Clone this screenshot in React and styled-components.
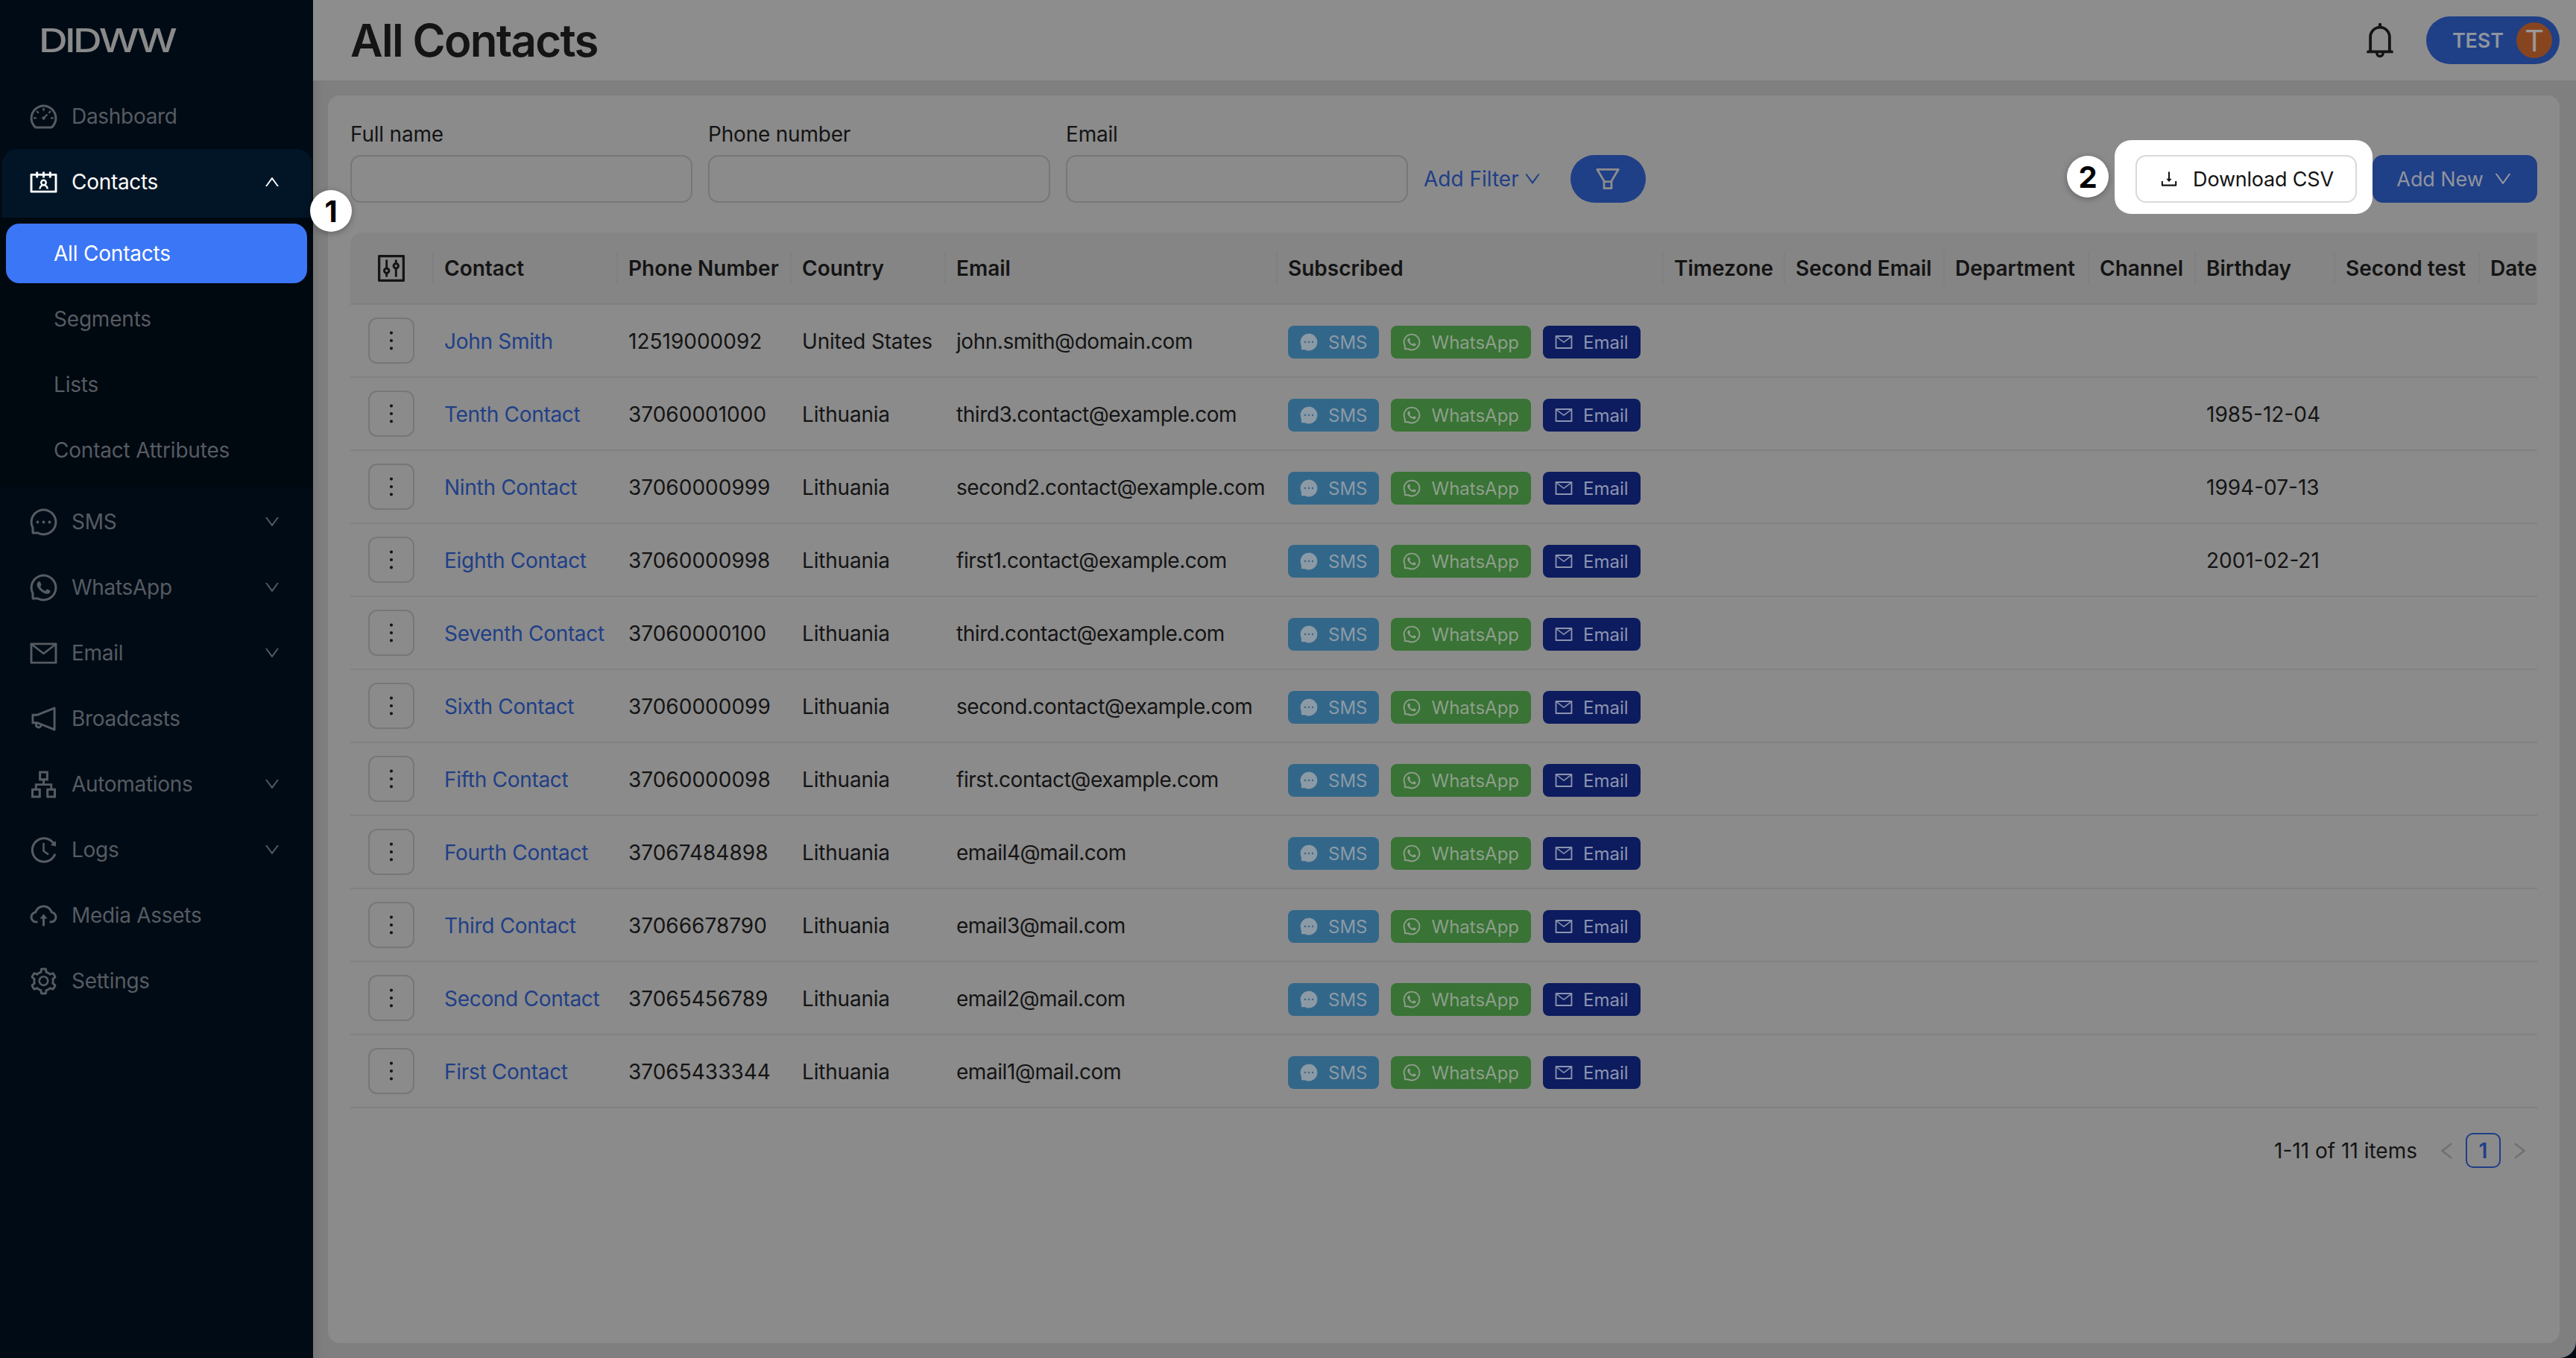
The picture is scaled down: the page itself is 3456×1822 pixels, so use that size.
import React from "react";
import styled, { createGlobalStyle } from "styled-components";
import {
  AiOutlineDashboard,
  AiOutlineContacts,
  AiOutlineMessage,
  AiFillMessage,
  AiOutlineWhatsApp,
  AiOutlineMail,
  AiOutlineNotification,
  AiOutlineApartment,
  AiOutlineHistory,
  AiOutlineCloudUpload,
  AiOutlineSetting,
  AiOutlineBell,
  AiOutlineDownload,
  AiOutlineFilter,
  AiOutlineDown,
  AiOutlineUp,
  AiOutlineMore,
  AiOutlineLeft,
  AiOutlineRight,
  AiOutlineControl,
} from "react-icons/ai";

const BLUE = "#1f3f87";
const INK = "#141414";

const GlobalStyle = createGlobalStyle`
  html, body {
    margin: 0;
    padding: 0;
    background: #010b15;
  }
  body {
    font-family: Inter, "Noto Sans", sans-serif;
    color: ${INK};
  }
  * { box-sizing: border-box; }
`;

const Shell = styled.div`
  display: flex;
  width: 3456px;
  height: 1822px;
  overflow: hidden;
  background: #010b15;
`;

const Sidebar = styled.aside`
  flex: 0 0 420px;
  background: #010b15;
  display: flex;
  flex-direction: column;
`;

const LogoRow = styled.div`
  height: 112px;
  padding: 28px 0 0 52px;
`;

const Logo = styled.span`
  display: inline-block;
  font-family: Inter, sans-serif;
  font-size: 44px;
  line-height: 53px;
  font-weight: 500;
  color: #8a8a8a;
  letter-spacing: -3px;
  transform: scaleX(1.22);
  transform-origin: left center;
`;

const NavRow = styled.div`
  height: 88px;
  display: flex;
  align-items: center;
  padding: 0 45px 0 40px;
  font-size: 28px;
  letter-spacing: -0.3px;
  color: ${(p) => (p.$active ? "#ffffff" : "#565b62")};
  ${(p) =>
    p.$active &&
    `
    background: #021526;
    margin: 0 2px 0 3px;
    padding-left: 37px;
    padding-right: 43px;
    height: 92px;
    padding-bottom: 4px;
    border-radius: 20px 20px 0 0;
  `}
`;

const NavIcon = styled.span`
  display: flex;
  justify-content: center;
  width: 36px;
  margin-right: 20px;
  svg {
    flex: none;
    font-size: 41px;
  }
`;

const NavLabel = styled.span`
  flex: 1;
`;

const NavArrow = styled.span`
  display: flex;
  font-size: 24px;
  margin-right: -2px;
`;

const SubMenu = styled.div`
  background: #000810;
  height: 361px;
  margin-bottom: 3px;
  padding: 8px 8px 0;
`;

const SubItem = styled.div`
  height: 80px;
  margin-bottom: 8px;
  border-radius: 18px;
  padding-left: 64px;
  display: flex;
  align-items: center;
  font-size: 28px;
  letter-spacing: -0.2px;
  color: ${(p) => (p.$active ? "#ffffff" : "#565b62")};
  background: ${(p) => (p.$active ? "#3b76f6" : "transparent")};
`;

const Main = styled.main`
  flex: 1;
  min-width: 0;
  display: flex;
  flex-direction: column;
  background: #7f7f7f;
  border-bottom-right-radius: 22px;
  box-shadow: inset 14px 0 12px -10px #737373;
`;

const TopBar = styled.header`
  height: 108px;
  flex: 0 0 108px;
  background: #8d8d8d;
  display: flex;
  align-items: center;
  padding: 0 22px 0 50px;
`;

const Title = styled.h1`
  flex: 1;
  margin: 0;
  font-size: 60px;
  font-weight: 600;
  letter-spacing: -1.7px;
  color: ${INK};
`;

const Bell = styled.span`
  display: flex;
  font-size: 54px;
  margin-right: 35px;
  color: ${INK};
`;

const UserPill = styled.div`
  width: 179px;
  height: 64px;
  border-radius: 32px;
  background: ${BLUE};
  display: flex;
  align-items: center;
  justify-content: space-between;
  padding: 0 10px 0 35px;
  font-size: 27px;
  font-weight: 600;
  letter-spacing: -0.2px;
  color: #8f949e;
`;

const Avatar = styled.span`
  width: 48px;
  height: 48px;
  border-radius: 50%;
  background: #87451f;
  color: #999999;
  font-weight: 400;
  font-size: 40px;
  display: flex;
  align-items: center;
  justify-content: center;
`;

const Panel = styled.section`
  flex: 1;
  margin: 20px 22px 20px 20px;
  background: #8b8b8b;
  border-radius: 16px;
  padding: 40px 30px 0 30px;
`;

const Toolbar = styled.div`
  display: flex;
  align-items: flex-end;
  height: 104px;
  margin-bottom: 40px;
  position: relative;
`;

const Field = styled.label`
  display: flex;
  flex-direction: column;
  width: 459px;
  margin-right: 21px;
  font-size: 28px;
  letter-spacing: -0.2px;
`;

const FieldLabel = styled.span`
  line-height: 34px;
  margin-bottom: 11px;
`;

const TextInput = styled.input`
  height: 64px;
  border: 2px solid #777777;
  border-radius: 14px;
  background: transparent;
  outline: none;
`;

const AddFilter = styled.div`
  height: 64px;
  display: flex;
  align-items: center;
  gap: 5px;
  font-size: 28px;
  color: ${BLUE};
  margin-right: 38px;
`;

const FilterButton = styled.button`
  width: 101px;
  height: 64px;
  border: none;
  border-radius: 32px;
  background: ${BLUE};
  color: #8d8d8d;
  font-size: 40px;
  display: flex;
  align-items: center;
  justify-content: center;
`;

const Actions = styled.div`
  margin-left: auto;
  display: flex;
  align-items: flex-end;
`;

const Spotlight = styled.div`
  position: relative;
  z-index: 1;
  margin: -20px 0 -15px;
  padding: 20px 21px 15px 28px;
  background: #ffffff;
  border-radius: 22px;
  display: flex;
`;

const DownloadButton = styled.button`
  width: 297px;
  height: 64px;
  border: 2px solid #d9d9d9;
  border-radius: 14px;
  background: #ffffff;
  color: ${INK};
  font-family: inherit;
  font-size: 27px;
  letter-spacing: -0.2px;
  display: flex;
  align-items: center;
  justify-content: center;
  gap: 18px;
  svg {
    font-size: 28px;
  }
`;

const AddNewButton = styled.button`
  width: 221px;
  height: 64px;
  border: none;
  border-radius: 14px;
  background: ${BLUE};
  color: #8f949e;
  font-family: inherit;
  font-size: 27px;
  letter-spacing: -0.1px;
  display: flex;
  align-items: center;
  justify-content: center;
  gap: 12px;
  svg {
    font-size: 28px;
  }
`;

const Marker = styled.span`
  position: absolute;
  z-index: 5;
  left: ${(p) => p.$x}px;
  top: ${(p) => p.$y}px;
  width: 56px;
  height: 56px;
  border-radius: 50%;
  background: #ffffff;
  color: #000000;
  font-size: 40px;
  font-weight: 700;
  display: flex;
  align-items: center;
  justify-content: center;
  box-shadow: 0 2px 8px rgba(0, 0, 0, 0.3);
`;

const TableClip = styled.div`
  overflow: hidden;
  width: 2934px;
`;

const Table = styled.table`
  table-layout: fixed;
  width: 3100px;
  border-collapse: collapse;
`;

const Col = styled.col`
  width: ${(p) => p.$w}px;
`;

const Th = styled.th`
  height: 96px;
  padding: 0 0 0 16px;
  text-align: left;
  font-size: 28px;
  font-weight: 600;
  color: ${INK};
  background: #858585;
  border-bottom: 2px solid #7f7f7f;
  position: relative;
  white-space: nowrap;
  &:not(:first-child)::before {
    content: "";
    position: absolute;
    left: 0;
    top: 26px;
    bottom: 26px;
    width: 2px;
    background: #808080;
  }
  &:first-child {
    padding: 0;
    border-top-left-radius: 16px;
  }
`;

const ColumnsIcon = styled.span`
  display: flex;
  justify-content: center;
  font-size: 46px;
`;

const Td = styled.td`
  height: 98px;
  padding: 2px 0 0 16px;
  font-size: 28px;
  color: ${INK};
  border-bottom: 2px solid #818181;
  white-space: nowrap;
  letter-spacing: ${(p) => p.$spacing || 0}px;
  &:first-child {
    padding: 0;
  }
`;

const MoreButton = styled.button`
  display: flex;
  align-items: center;
  justify-content: center;
  width: 62px;
  height: 62px;
  margin: 0 auto;
  padding: 0;
  border: 2px solid #777777;
  border-radius: 12px;
  background: transparent;
  color: ${INK};
  font-size: 38px;
`;

const ContactLink = styled.a`
  color: ${BLUE};
  text-decoration: none;
`;

const Tags = styled.div`
  display: flex;
  gap: 16px;
  padding-top: 2px;
`;

const Tag = styled.span`
  height: 44px;
  padding: 0 16px;
  border-radius: 8px;
  background: ${(p) => p.$bg};
  color: ${(p) => p.$fg};
  font-size: 24px;
  letter-spacing: 0;
  display: inline-flex;
  align-items: center;
  gap: 14px;
  svg {
    flex: none;
    font-size: 26px;
    margin: 0 -1px;
  }
`;

const Pagination = styled.div`
  display: flex;
  align-items: center;
  justify-content: flex-end;
  height: 47px;
  margin-top: 33px;
  padding-right: 9px;
  font-size: 28px;
`;

const PageInfo = styled.span`
  margin-right: 25px;
`;

const PageArrow = styled.span`
  display: flex;
  font-size: 30px;
  color: #6f6f6f;
`;

const PageNumber = styled.span`
  width: 47px;
  height: 47px;
  margin: 0 10px;
  border: 2px solid ${BLUE};
  border-radius: 10px;
  color: ${BLUE};
  font-weight: 600;
  display: flex;
  align-items: center;
  justify-content: center;
`;

const navTop = [{ label: "Dashboard", icon: <AiOutlineDashboard /> }];

const navBottom = [
  { label: "SMS", icon: <AiOutlineMessage />, arrow: true },
  { label: "WhatsApp", icon: <AiOutlineWhatsApp />, arrow: true },
  { label: "Email", icon: <AiOutlineMail />, arrow: true },
  { label: "Broadcasts", icon: <AiOutlineNotification /> },
  { label: "Automations", icon: <AiOutlineApartment />, arrow: true },
  { label: "Logs", icon: <AiOutlineHistory />, arrow: true },
  { label: "Media Assets", icon: <AiOutlineCloudUpload /> },
  { label: "Settings", icon: <AiOutlineSetting /> },
];

const subItems = ["All Contacts", "Segments", "Lists", "Contact Attributes"];

const colWidths = [110, 247, 233, 207, 445, 518, 163, 214, 194, 143, 187, 194, 245];

const columns = [
  "Contact",
  "Phone Number",
  "Country",
  "Email",
  "Subscribed",
  "Timezone",
  "Second Email",
  "Department",
  "Channel",
  "Birthday",
  "Second test",
  "Date",
];

const rows = [
  ["John Smith", "12519000092", "United States", "john.smith@domain.com", ""],
  ["Tenth Contact", "37060001000", "Lithuania", "third3.contact@example.com", "1985-12-04"],
  ["Ninth Contact", "37060000999", "Lithuania", "second2.contact@example.com", "1994-07-13"],
  ["Eighth Contact", "37060000998", "Lithuania", "first1.contact@example.com", "2001-02-21"],
  ["Seventh Contact", "37060000100", "Lithuania", "third.contact@example.com", ""],
  ["Sixth Contact", "37060000099", "Lithuania", "second.contact@example.com", ""],
  ["Fifth Contact", "37060000098", "Lithuania", "first.contact@example.com", ""],
  ["Fourth Contact", "37067484898", "Lithuania", "email4@mail.com", ""],
  ["Third Contact", "37066678790", "Lithuania", "email3@mail.com", ""],
  ["Second Contact", "37065456789", "Lithuania", "email2@mail.com", ""],
  ["First Contact", "37065433344", "Lithuania", "email1@mail.com", ""],
];

const NavItem = ({ item }) => (
  <NavRow>
    <NavIcon>{item.icon}</NavIcon>
    <NavLabel>{item.label}</NavLabel>
    {item.arrow && (
      <NavArrow>
        <AiOutlineDown />
      </NavArrow>
    )}
  </NavRow>
);

const Subscribed = () => (
  <Tags>
    <Tag $bg="#33678a" $fg="#8c9aa5">
      <AiFillMessage /> SMS
    </Tag>
    <Tag $bg="#397335" $fg="#8e9e8c">
      <AiOutlineWhatsApp /> WhatsApp
    </Tag>
    <Tag $bg="#0d1c5f" $fg="#8d94ae">
      <AiOutlineMail /> Email
    </Tag>
  </Tags>
);

export default function App() {
  return (
    <>
      <GlobalStyle />
      <Shell>
        <Sidebar>
          <LogoRow>
            <Logo>DIDWW</Logo>
          </LogoRow>
          {navTop.map((item) => (
            <NavItem key={item.label} item={item} />
          ))}
          <NavRow $active>
            <NavIcon>
              <AiOutlineContacts />
            </NavIcon>
            <NavLabel>Contacts</NavLabel>
            <NavArrow>
              <AiOutlineUp />
            </NavArrow>
          </NavRow>
          <SubMenu>
            {subItems.map((label, i) => (
              <SubItem key={label} $active={i === 0}>
                {label}
              </SubItem>
            ))}
          </SubMenu>
          {navBottom.map((item) => (
            <NavItem key={item.label} item={item} />
          ))}
        </Sidebar>

        <Main>
          <TopBar>
            <Title>All Contacts</Title>
            <Bell>
              <AiOutlineBell />
            </Bell>
            <UserPill>
              TEST
              <Avatar>T</Avatar>
            </UserPill>
          </TopBar>

          <Panel>
            <Toolbar>
              <Field>
                <FieldLabel>Full name</FieldLabel>
                <TextInput />
              </Field>
              <Field>
                <FieldLabel>Phone number</FieldLabel>
                <TextInput />
              </Field>
              <Field>
                <FieldLabel>Email</FieldLabel>
                <TextInput />
              </Field>
              <AddFilter>
                Add Filter <AiOutlineDown size={26} />
              </AddFilter>
              <FilterButton>
                <AiOutlineFilter />
              </FilterButton>
              <Actions>
                <Spotlight>
                  <DownloadButton>
                    <AiOutlineDownload /> Download CSV
                  </DownloadButton>
                </Spotlight>
                <AddNewButton>
                  Add New <AiOutlineDown />
                </AddNewButton>
              </Actions>
            </Toolbar>

            <TableClip>
              <Table>
                <colgroup>
                  {colWidths.map((w, i) => (
                    <Col key={i} $w={w} />
                  ))}
                </colgroup>
                <thead>
                  <tr>
                    <Th>
                      <ColumnsIcon>
                        <AiOutlineControl />
                      </ColumnsIcon>
                    </Th>
                    {columns.map((c) => (
                      <Th key={c}>{c}</Th>
                    ))}
                  </tr>
                </thead>
                <tbody>
                  {rows.map(([name, phone, country, email, birthday]) => (
                    <tr key={name}>
                      <Td>
                        <MoreButton>
                          <AiOutlineMore />
                        </MoreButton>
                      </Td>
                      <Td $spacing={-0.3}>
                        <ContactLink>{name}</ContactLink>
                      </Td>
                      <Td>{phone}</Td>
                      <Td $spacing={-0.2}>{country}</Td>
                      <Td $spacing={-0.45}>{email}</Td>
                      <Td>
                        <Subscribed />
                      </Td>
                      <Td />
                      <Td />
                      <Td />
                      <Td />
                      <Td>{birthday}</Td>
                      <Td />
                      <Td />
                    </tr>
                  ))}
                </tbody>
              </Table>
            </TableClip>

            <Pagination>
              <PageInfo>1-11 of 11 items</PageInfo>
              <PageArrow>
                <AiOutlineLeft />
              </PageArrow>
              <PageNumber>1</PageNumber>
              <PageArrow>
                <AiOutlineRight />
              </PageArrow>
            </Pagination>
          </Panel>
        </Main>

        <Marker $x={416} $y={255}>1</Marker>
        <Marker $x={2773} $y={209}>2</Marker>
      </Shell>
    </>
  );
}
